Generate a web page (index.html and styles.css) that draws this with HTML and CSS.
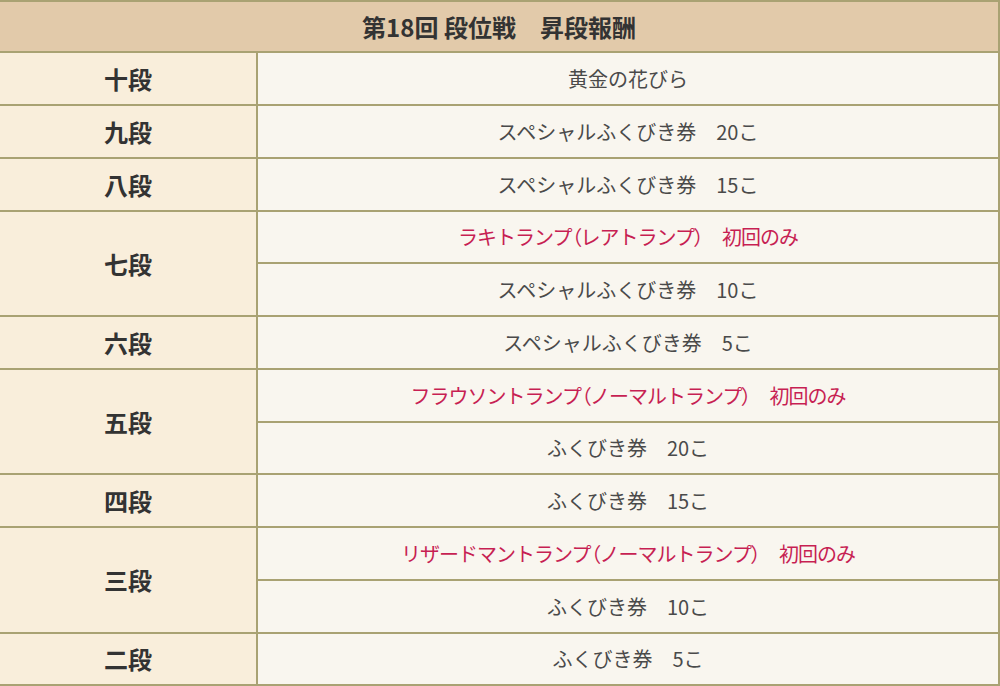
FILE: index.html
```html
<!DOCTYPE html>
<html lang="ja">
<head>
    <meta charset="UTF-8">
    <meta name="viewport" content="width=device-width, initial-scale=1.0">
    <title>段位戦 昇段報酬</title>
    <link rel="stylesheet" href="styles.css">
</head>
<body>
    <table class="rewards">
        <colgroup>
            <col class="rank-col">
            <col>
        </colgroup>
        <thead>
            <tr>
                <th colspan="2">第18回 段位戦　昇段報酬</th>
            </tr>
        </thead>
        <tbody>
            <tr>
                <td class="rank">十段</td>
                <td class="prize">黄金の花びら</td>
            </tr>
            <tr>
                <td class="rank">九段</td>
                <td class="prize">スペシャルふくびき券　20こ</td>
            </tr>
            <tr>
                <td class="rank">八段</td>
                <td class="prize">スペシャルふくびき券　15こ</td>
            </tr>
            <tr>
                <td class="rank" rowspan="2">七段</td>
                <td class="prize first-time">ラキトランプ<span class="paren">（</span>レアトランプ<span class="paren">）</span>　初回のみ</td>
            </tr>
            <tr>
                <td class="prize">スペシャルふくびき券　10こ</td>
            </tr>
            <tr>
                <td class="rank">六段</td>
                <td class="prize">スペシャルふくびき券　5こ</td>
            </tr>
            <tr>
                <td class="rank" rowspan="2">五段</td>
                <td class="prize first-time">フラウソントランプ<span class="paren">（</span>ノーマルトランプ<span class="paren">）</span>　初回のみ</td>
            </tr>
            <tr>
                <td class="prize">ふくびき券　20こ</td>
            </tr>
            <tr>
                <td class="rank">四段</td>
                <td class="prize">ふくびき券　15こ</td>
            </tr>
            <tr>
                <td class="rank" rowspan="2">三段</td>
                <td class="prize first-time">リザードマントランプ<span class="paren">（</span>ノーマルトランプ<span class="paren">）</span>　初回のみ</td>
            </tr>
            <tr>
                <td class="prize">ふくびき券　10こ</td>
            </tr>
            <tr>
                <td class="rank">二段</td>
                <td class="prize">ふくびき券　5こ</td>
            </tr>
        </tbody>
    </table>
</body>
</html>
```

FILE: styles.css
```css
body {
    margin: 0;
    background: #f9f6ef;
    font-family: 'Noto Sans CJK JP', 'Noto Sans', sans-serif;
    overflow: hidden;
}

.rewards {
    width: 1000px;
    border-collapse: collapse;
    table-layout: fixed;
    border-top: 2px solid #a9a273;
    border-right: 2px solid #a9a273;
}

.rank-col {
    width: 257px;
}

.rewards th,
.rewards td {
    height: 50.75px;
    padding: 0;
    border: 2px solid #a9a273;
    text-align: center;
    vertical-align: middle;
}

.rewards th {
    height: 49.25px;
    border-left: 0;
    background: #e2caaa;
    color: #333;
    font-size: 24px;
    font-weight: bold;
}

.rank {
    background: #f9eedb;
    color: #333;
    font-size: 24px;
    font-weight: bold;
}

.rewards td:first-child {
    border-left: 0;
}

.prize {
    background: #f9f6ef;
    color: #4a4a4a;
    font-size: 20px;
}

.first-time {
    color: #c71f53;
    letter-spacing: -1px;
}

.paren {
    font-feature-settings: "palt";
}
```
